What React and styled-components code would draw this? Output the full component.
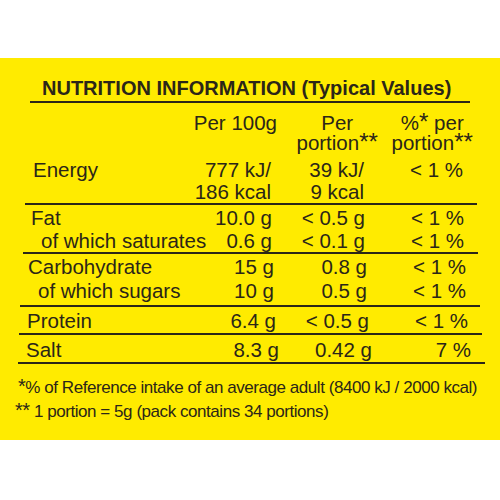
import React from 'react';
import styled, { createGlobalStyle } from 'styled-components';

const FONT = `"Liberation Sans", Arial, sans-serif`;

const GlobalStyle = createGlobalStyle`
  html, body {
    margin: 0;
    padding: 0;
    background: #ffffff;
  }

  body {
    font-family: ${FONT};
    color: #2b2618;
  }
`;

const Page = styled.div`
  width: 500px;
  height: 500px;
  padding-top: 58px;
  box-sizing: border-box;
`;

const Panel = styled.section`
  background: #ffeb00;
  height: 382px;
  padding-top: 17px;
  box-sizing: border-box;
  overflow: hidden;
`;

const Title = styled.h1`
  margin: 0 30px;
  padding-left: 12px;
  font-size: 20px;
  font-weight: 700;
  line-height: 26px;
  white-space: nowrap;
  border-bottom: 2px solid currentColor;
`;

const Section = styled.div`
  margin: 0 ${(p) => 500 - p.$r}px 0 ${(p) => p.$l}px;
  padding: ${(p) => p.$pt}px 14px ${(p) => p.$pb}px 8px;
  border-bottom: 2px solid currentColor;
  font-size: 20.5px;
`;

const Row = styled.div`
  display: grid;
  grid-template-columns: minmax(0, 1fr) 93px 93px 99px;
  line-height: ${(p) => p.$lh || 23}px;
  margin-bottom: ${(p) => p.$gap || 0}px;
`;

const Name = styled.div`
  white-space: nowrap;
  padding-left: ${(p) => (p.$indent ? 10 : 0)}px;
`;

const Num = styled.div`
  text-align: right;
  white-space: nowrap;
`;

const Head = styled.div`
  justify-self: end;
  text-align: center;
  white-space: nowrap;
  margin-right: ${(p) => p.$shift || 0}px;
`;

const Star = styled.span`
  font-size: 1.18em;
  line-height: 0;
`;

const Notes = styled.div`
  margin-top: 12px;
  padding-left: 15px;
  font-size: 17px;
  line-height: 24px;
  letter-spacing: -0.45px;
`;

const Note = styled.div`
  white-space: nowrap;
  padding-left: ${(p) => p.$indent || 0}px;
`;

const rows = [
  {
    l: 23, r: 478, pt: 1, pb: 0,
    items: [
      ['Fat', '10.0 g', '< 0.5 g', '< 1 %'],
      ['of which saturates', '0.6 g', '< 0.1 g', '< 1 %', true],
    ],
  },
  {
    l: 20, r: 480, pt: 1, pb: 2, lh: 24,
    items: [
      ['Carbohydrate', '15 g', '0.8 g', '< 1 %'],
      ['of which sugars', '10 g', '0.5 g', '< 1 %', true],
    ],
  },
  {
    l: 19, r: 482, pt: 2, pb: 1,
    items: [['Protein', '6.4 g', '< 0.5 g', '< 1 %']],
  },
  {
    l: 18, r: 485, pt: 3, pb: 1,
    items: [['Salt', '8.3 g', '0.42 g', '7 %']],
  },
];

const App = () => (
  <Page>
    <GlobalStyle />
    <Panel>
      <Title>NUTRITION INFORMATION (Typical Values)</Title>

      <Section $l={25} $r={477} $pt={10} $pb={0}>
        <Row $lh={20} $gap={6}>
          <div />
          <Head $shift={-6}>Per 100g</Head>
          <Head $shift={-14}>
            Per
            <br />
            portion<Star>**</Star>
          </Head>
          <Head $shift={-10}>
            %<Star>*</Star> per
            <br />
            portion<Star>**</Star>
          </Head>
        </Row>
        <Row $lh={22}>
          <Name>Energy</Name>
          <Num>
            777 kJ/
            <br />
            186 kcal
          </Num>
          <Num>
            39 kJ/
            <br />
            9 kcal
          </Num>
          <Num>&lt; 1 %</Num>
        </Row>
      </Section>

      {rows.map((s) => (
        <Section key={s.items[0][0]} $l={s.l} $r={s.r} $pt={s.pt} $pb={s.pb}>
          {s.items.map(([name, a, b, c, indent]) => (
            <Row key={name} $lh={s.lh}>
              <Name $indent={indent}>{name}</Name>
              <Num>{a}</Num>
              <Num>{b}</Num>
              <Num>{c}</Num>
            </Row>
          ))}
        </Section>
      ))}

      <Notes>
        <Note $indent={3}>
          <Star>*</Star>% of Reference intake of an average adult (8400 kJ / 2000 kcal)
        </Note>
        <Note>
          <Star>**</Star> 1 portion = 5g (pack contains 34 portions)
        </Note>
      </Notes>
    </Panel>
  </Page>
);

export default App;
